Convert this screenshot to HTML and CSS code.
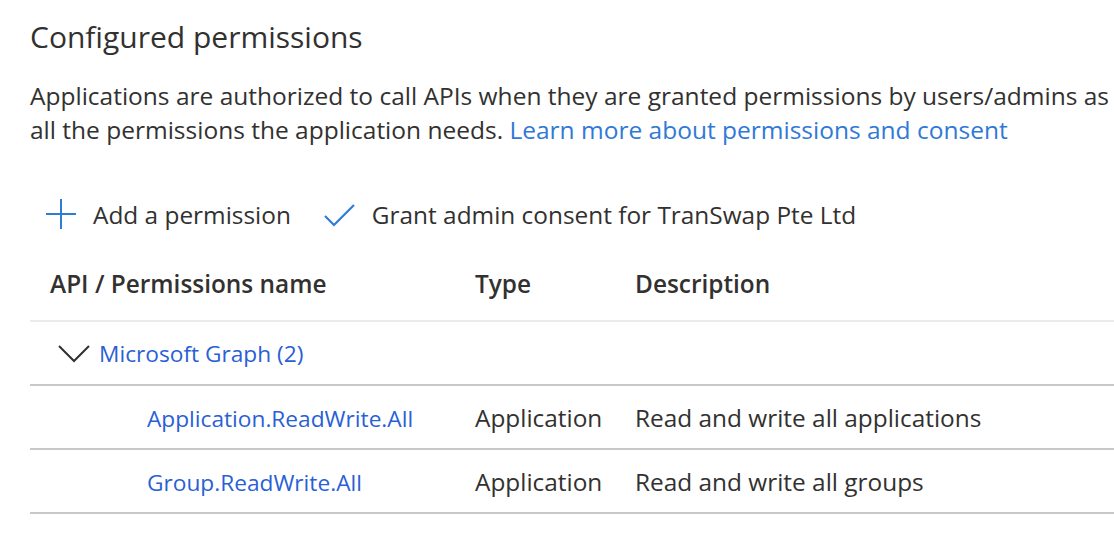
FILE: index.html
```html
<!DOCTYPE html>
<html lang="en">
<head>
<meta charset="utf-8">
<title>Configured permissions</title>
<link rel="stylesheet" href="styles.css">
</head>
<body>
<main class="page">
  <h2 class="title">Configured permissions</h2>
  <p class="desc">
    <span class="desc-line">Applications are authorized to call APIs when they are granted permissions by users/admins as</span>
    <span class="desc-line">all the permissions the application needs. <a class="learn" href="#">Learn more about permissions and consent</a></span>
  </p>

  <div class="toolbar">
    <button class="tool">
      <svg class="ico-plus" width="30" height="30" viewBox="0 0 30 30" aria-hidden="true"><path d="M15 0V30M0 15H30" fill="none" stroke="#2f7bd6" stroke-width="2"/></svg>
      <span>Add a permission</span>
    </button>
    <button class="tool">
      <svg class="ico-check" width="31" height="23" viewBox="0 0 31 23" aria-hidden="true"><path d="M1 12L10 21L30 1" fill="none" stroke="#2f7bd6" stroke-width="2.2"/></svg>
      <span>Grant admin consent for TranSwap Pte Ltd</span>
    </button>
  </div>

  <div class="table">
    <div class="row head">
      <div class="cell c1">API / Permissions name</div>
      <div class="cell c2">Type</div>
      <div class="cell c3">Description</div>
    </div>
    <div class="row group">
      <div class="cell c1 group-cell">
        <svg class="ico-chev" width="32" height="18" viewBox="0 0 32 18" aria-hidden="true"><path d="M1 1L16 16L31 1" fill="none" stroke="#323130" stroke-width="2"/></svg>
        <a class="link" href="#">Microsoft Graph (2)</a>
      </div>
    </div>
    <div class="row item">
      <div class="cell c1 perm"><a class="link" href="#">Application.ReadWrite.All</a></div>
      <div class="cell c2">Application</div>
      <div class="cell c3">Read and write all applications</div>
    </div>
    <div class="row item">
      <div class="cell c1 perm"><a class="link" href="#">Group.ReadWrite.All</a></div>
      <div class="cell c2">Application</div>
      <div class="cell c3">Read and write all groups</div>
    </div>
  </div>
</main>
</body>
</html>
```
FILE: styles.css
```css
html, body {
  margin: 0;
  padding: 0;
  background: #ffffff;
  overflow: hidden;
}

body {
  font-family: "Open Sans", "Noto Sans", "Liberation Sans", sans-serif;
  color: #323130;
}

.page {
  padding: 14px 0 0 30px;
}

.title {
  margin: 0;
  font-size: 30px;
  font-weight: 400;
  line-height: 46px;
}

.desc {
  margin: 19px 0 0;
  font-size: 24.5px;
  line-height: 34px;
}

.desc-line {
  display: block;
  white-space: nowrap;
}

.learn {
  color: #3079d6;
  text-decoration: none;
}

.toolbar {
  display: flex;
  align-items: center;
  gap: 33px;
  height: 54px;
  margin-top: 40px;
  padding-left: 16px;
}

.tool {
  display: flex;
  align-items: center;
  gap: 17px;
  border: 0;
  background: none;
  padding: 0;
  font: inherit;
  font-size: 24.4px;
  color: #323130;
}

.ico-check { margin-top: 2px; }

.table {
  width: 1084px;
  margin-top: 11px;
  font-size: 24.4px;
}

.row {
  display: flex;
  align-items: center;
}

.head {
  height: 70px;
  padding-bottom: 6px;
  box-sizing: border-box;
  font-weight: 600;
  border-bottom: 2px solid #edebe9;
}

.group,
.item {
  height: 62px;
  border-bottom: 2px solid #c8c8c8;
}

.cell {
  padding-left: 20px;
  box-sizing: border-box;
  white-space: nowrap;
}

.c1 { width: 425px; }
.c2 { width: 160px; }
.c3 { flex: 1; }

.group-cell {
  display: flex;
  align-items: center;
  gap: 9px;
  padding-left: 28px;
}

.ico-chev { margin-top: 2px; }

.perm { padding-left: 117px; }

.link {
  color: #2a5fd6;
  text-decoration: none;
  font-size: 22.7px;
}
```
